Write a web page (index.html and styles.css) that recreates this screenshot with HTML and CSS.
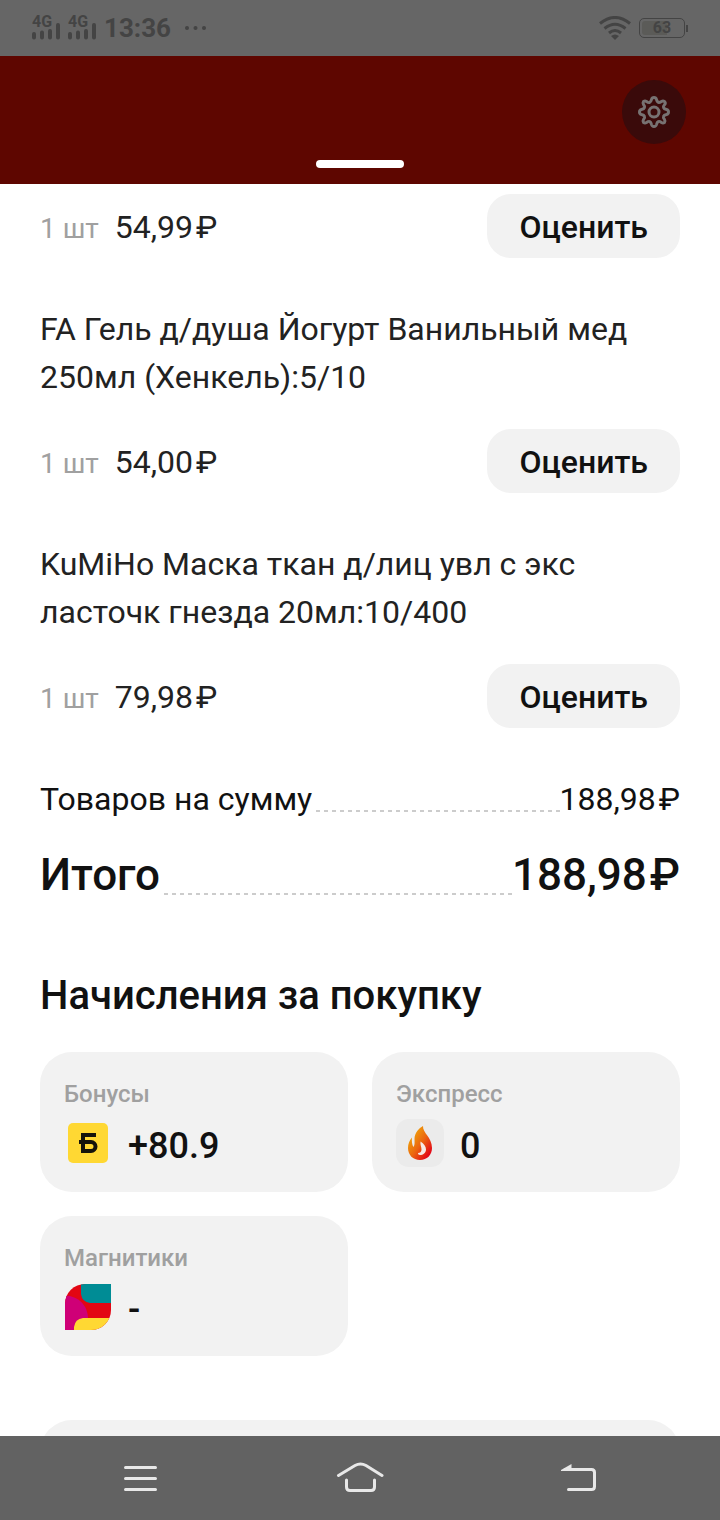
FILE: index.html
```html
<!DOCTYPE html>
<html lang="ru">
  <head>
    <meta charset="UTF-8" />
    <meta name="viewport" content="width=device-width, initial-scale=1.0" />
    <title>Покупка</title>
    <link rel="stylesheet" href="styles.css">
  </head>
  <body>
    <div class="status-bar">
      <svg class="signal" width="66" height="40" viewBox="0 -6 66 40">
        <text x="0" y="13">4G</text>
        <text x="36" y="13">4G</text>
        <path d="M2 20v3.500M10 18.500v5M18 17v6.500M26 11v12.500M38 20v3.500M46 18.500v5M54 17v6.500M62 11v12.500" />
      </svg>
      <span class="clock">13:36</span>
      <svg class="dots" width="22" height="4" viewBox="0 0 22 4">
        <circle cx="2" cy="2" r="2" />
        <circle cx="10.500" cy="2" r="2" />
        <circle cx="19" cy="2" r="2" />
      </svg>
      <svg class="wifi" width="34" height="24" viewBox="0 0 34 24">
        <path d="M2 7.500Q17-4.500 32 7.500M6.500 12.500Q17 4 27.500 12.500M11 17Q17 12 23 17" />
        <path class="wifi-dot" d="M13 20q4-3 8 0l-4 4z" />
      </svg>
      <span class="battery"><span class="battery-level">63</span></span>
    </div>

    <header class="header">
      <button type="button" class="settings" aria-label="Настройки">
        <svg width="32" height="32" viewBox="0 0 32 32">
          <path d="M13.500 3.500Q14 1.500 16 1.500T18.500 3.500Q19 6 21 6.500Q22 6.500 23.500 5.500Q25 4.500 26.500 5.500Q28 7 26.500 8.800Q25 10.500 25.500 11.500Q26 13 28.500 13.500Q30.500 14 30.500 16T28.500 18.500Q26 19 25.500 20.500Q25 21.500 26.500 23.500Q27.500 25 26.500 26.500Q25 27.500 23.500 26.500Q21.500 25 20.500 25.500Q19 26 18.500 28.500Q18 30.500 16 30.500T13.500 28.500Q13 26 11.500 25.500Q10.500 25 8.500 26.500Q7 27.500 5.500 26.500Q4.500 25 5.500 23.500Q7 21.500 6.500 20.500Q6 19 3.500 18.500Q1.500 18 1.500 16T3.500 13.500Q6 13 6.500 11.500Q7 10.500 5.500 8.500Q4.500 7 5.500 5.500Q7 4.500 8.500 5.500Q10.500 7 11.500 6.500Q13 6 13.500 3.500Z" />
          <circle cx="16" cy="16" r="5" />
        </svg>
      </button>
      <span class="handle"></span>
    </header>

    <main class="sheet">
      <!-- purchased goods -->
      <section class="item">
        <div class="item-row">
          <span class="qty">1 шт</span>
          <span class="price">54,99<span class="currency">₽</span></span>
          <button type="button" class="rate">Оценить</button>
        </div>
      </section>
      <section class="item">
        <p class="item-name">FA Гель д/душа Йогурт Ванильный мед 250мл (Хенкель):5/10</p>
        <div class="item-row">
          <span class="qty">1 шт</span>
          <span class="price">54,00<span class="currency">₽</span></span>
          <button type="button" class="rate">Оценить</button>
        </div>
      </section>
      <section class="item">
        <p class="item-name">KuMiHo Маска ткан д/лиц увл с экс ласточк гнезда 20мл:10/400</p>
        <div class="item-row">
          <span class="qty">1 шт</span>
          <span class="price">79,98<span class="currency">₽</span></span>
          <button type="button" class="rate">Оценить</button>
        </div>
      </section>

      <!-- totals -->
      <div class="sum">
        <span>Товаров на сумму</span>
        <span class="leader"></span>
        <span>188,98<span class="currency">₽</span></span>
      </div>
      <div class="sum sum-total">
        <span>Итого</span>
        <span class="leader"></span>
        <span>188,98<span class="currency">₽</span></span>
      </div>

      <h2 class="title">Начисления за покупку</h2>
      <div class="cards">
        <div class="card">
          <div class="card-label">Бонусы</div>
          <div class="card-value">
            <svg width="48" height="48" viewBox="0 0 48 48">
              <rect x="4" y="4" width="40" height="40" rx="5" fill="#ffd833" />
              <path d="M32 16H19V32H27A4.500 4.500 0 0 0 27 23H15" fill="none" stroke="#15140a" stroke-width="4" />
            </svg>
            <span>+80.9</span>
          </div>
        </div>
        <div class="card">
          <div class="card-label">Экспресс</div>
          <div class="card-value">
            <svg width="48" height="48" viewBox="0 0 48 48">
              <defs>
                <linearGradient id="fire" x1="0.200" y1="0.200" x2="0.850" y2="0.850">
                  <stop offset="0" stop-color="#efa00b" />
                  <stop offset="0.500" stop-color="#eb6510" />
                  <stop offset="1" stop-color="#e30b18" />
                </linearGradient>
              </defs>
              <rect width="48" height="48" rx="13" fill="#ebebeb" />
              <path d="M27 7C26.500 14 36 18 36 29C36 36 31 41 24 41S12 36 12 29C12 25 13.500 21 16 18.500C15.500 22 16 26 17.500 28C19 26 18.500 23 18.500 20C18.500 14 23 9 27 7Z" fill="url(#fire)" />
              <path d="M24.500 22.500C28 25 30 27 30 30.500C30 34 27 36 24 36C22.500 36 22 35 22 34C24 34 25.500 33 25.500 30.500C25.500 27.500 24 26 24.500 22.500Z" fill="#f6eae7" />
            </svg>
            <span>0</span>
          </div>
        </div>
        <div class="card">
          <div class="card-label">Магнитики</div>
          <div class="card-value">
            <svg width="48" height="48" viewBox="0 0 48 48">
              <clipPath id="leaf">
                <path d="M1 21A20 20 0 0 1 21 1H47V27A20 20 0 0 1 27 47H1Z" />
              </clipPath>
              <g clip-path="url(#leaf)">
                <rect width="48" height="48" fill="#e30613" />
                <path d="M0 12.500C14 12.500 24 22 24 36V48H0Z" fill="#cf0077" />
                <path d="M17 0V11Q18 19 26 20H48V0Z" fill="#008c95" />
                <path d="M10 48V44Q11 36 19 35H48V48Z" fill="#ffd833" />
              </g>
            </svg>
            <span>-</span>
          </div>
        </div>
      </div>
      <div class="next-card"></div>
    </main>

    <nav class="nav-bar">
      <button type="button" class="nav-button" aria-label="Меню">
        <svg width="48" height="36" viewBox="0 0 48 36">
          <path d="M9.500 7.500H39.500M9.500 18.500H39.500M9.500 29.500H39.500" />
        </svg>
      </button>
      <button type="button" class="nav-button" aria-label="Домой">
        <svg width="48" height="36" viewBox="0 0 48 36">
          <path d="M2.500 15.500L19 5.500Q24.500 2.500 30 5.500L46 15.500M10.500 20V27Q10.500 30.500 14 30.500H35Q38.500 30.500 38.500 27V20" />
        </svg>
      </button>
      <button type="button" class="nav-button" aria-label="Назад">
        <svg width="48" height="36" viewBox="0 0 48 36">
          <path d="M9 9.500H35.500Q38.500 9.500 38.500 12.500V26.500Q38.500 29.500 35.500 29.500H12.500" />
          <path class="arrow" d="M5 10L15.500 4V11H5Z" />
        </svg>
      </button>
    </nav>
  </body>
</html>
```
FILE: styles.css
```css
* {
  box-sizing: border-box;
}

body {
  margin: 0;
  height: 100vh;
  display: flex;
  flex-direction: column;
  background-color: #ffffff;
  color: #111111;
  font-family: Roboto, "Noto Sans", sans-serif;
  font-size: 32px;
  line-height: 48px;
}

button {
  border: none;
  padding: 0;
  font-family: inherit;
  cursor: pointer;
}

svg {
  display: block;
  flex-shrink: 0;
}

/* phone status bar */
.status-bar {
  flex: none;
  height: 56px;
  padding: 0 32px;
  display: flex;
  align-items: center;
  background-color: #666666;
  color: #444444;
}

.signal text {
  font-size: 16px;
  font-weight: 700;
  fill: #444444;
}

.signal path {
  fill: none;
  stroke: #444444;
  stroke-width: 4;
  stroke-linecap: round;
}

.clock {
  margin-left: 6px;
  font-size: 26px;
  font-weight: 700;
  line-height: 50px;
}

.dots {
  margin-left: 14px;
  fill: #444444;
}

.wifi {
  margin-left: auto;
  fill: none;
  stroke: #444444;
  stroke-width: 3;
}

.wifi .wifi-dot {
  fill: #444444;
  stroke: none;
}

.battery {
  position: relative;
  width: 46px;
  height: 20px;
  margin: 0 3px 0 7px;
  padding: 2px;
  border: 1px solid #444444;
  border-radius: 5px;
}

/* battery tip */
.battery::after {
  content: "";
  position: absolute;
  top: 6px;
  right: -4px;
  width: 2px;
  height: 7px;
  background-color: #444444;
}

.battery-level {
  display: block;
  border-radius: 3px;
  background: linear-gradient(to right, #5b5b58 63%, transparent 63%);
  font-size: 16px;
  font-weight: 700;
  line-height: 14px;
  text-align: center;
}

/* dimmed header with the drag handle */
.header {
  flex: none;
  height: 128px;
  padding: 24px 34px 16px;
  display: flex;
  flex-direction: column;
  justify-content: space-between;
  align-items: center;
  background-color: #5e0600;
}

.settings {
  align-self: flex-end;
  width: 64px;
  height: 64px;
  display: flex;
  align-items: center;
  justify-content: center;
  border-radius: 50%;
  background-color: #3a0a0a;
}

.settings svg {
  fill: none;
  stroke: #777272;
  stroke-width: 3;
}

.handle {
  width: 88px;
  height: 8px;
  border-radius: 4px;
  background-color: #ffffff;
}

.sheet {
  flex: 1;
  min-height: 0;
  overflow: hidden;
  padding: 10px 40px 0;
}

.item {
  margin-bottom: 47px;
}

.item-name {
  margin: 0 0 28px;
  color: #222222;
}

.item-row {
  display: flex;
  align-items: baseline;
}

.qty {
  color: #a0a0a0;
  font-size: 28px;
}

.price {
  margin-left: 16px;
  color: #222222;
}

.currency {
  margin-left: 3px;
}

.rate {
  height: 64px;
  margin-left: auto;
  padding: 2px 32px 0;
  border-radius: 24px;
  background-color: #f2f2f2;
  color: #111111;
  font-size: 32px;
  font-weight: 500;
}

.sum {
  display: flex;
}

/* dashed line between the name and the price */
.leader {
  flex: 1;
  height: 2px;
  margin: 35px 0 0 4px;
  background: repeating-linear-gradient(to right, #cccccc 0 4px, transparent 4px 8px);
}

.sum-total {
  margin-top: 20px;
  font-size: 44px;
  font-weight: 500;
  line-height: 64px;
}

.sum-total .leader {
  margin-top: 50px;
}

.title {
  margin: 61px 0 28px;
  font-size: 40px;
  font-weight: 500;
  line-height: 56px;
}

.cards {
  display: grid;
  grid-template-columns: 1fr 1fr;
  gap: 24px;
}

.card {
  height: 140px;
  padding: 24px;
  border-radius: 32px;
  background-color: #f2f2f2;
}

.card-label {
  margin-bottom: 7px;
  color: #a0a0a0;
  font-size: 24px;
  font-weight: 500;
  line-height: 36px;
}

.card-value {
  display: flex;
  align-items: flex-start;
  gap: 16px;
  font-size: 36px;
  font-weight: 500;
  line-height: 54px;
}

.next-card {
  height: 140px;
  margin-top: 64px;
  border-radius: 32px;
  background-color: #f2f2f2;
}

/* phone navigation buttons */
.nav-bar {
  flex: none;
  height: 84px;
  padding: 0 30px;
  display: flex;
  background-color: #626262;
}

.nav-button {
  flex: 1;
  display: flex;
  align-items: center;
  justify-content: center;
  background: none;
}

.nav-button svg {
  fill: none;
  stroke: #e8e8e8;
  stroke-width: 3;
  stroke-linecap: round;
}

.nav-button .arrow {
  fill: #e8e8e8;
  stroke: none;
}
```
